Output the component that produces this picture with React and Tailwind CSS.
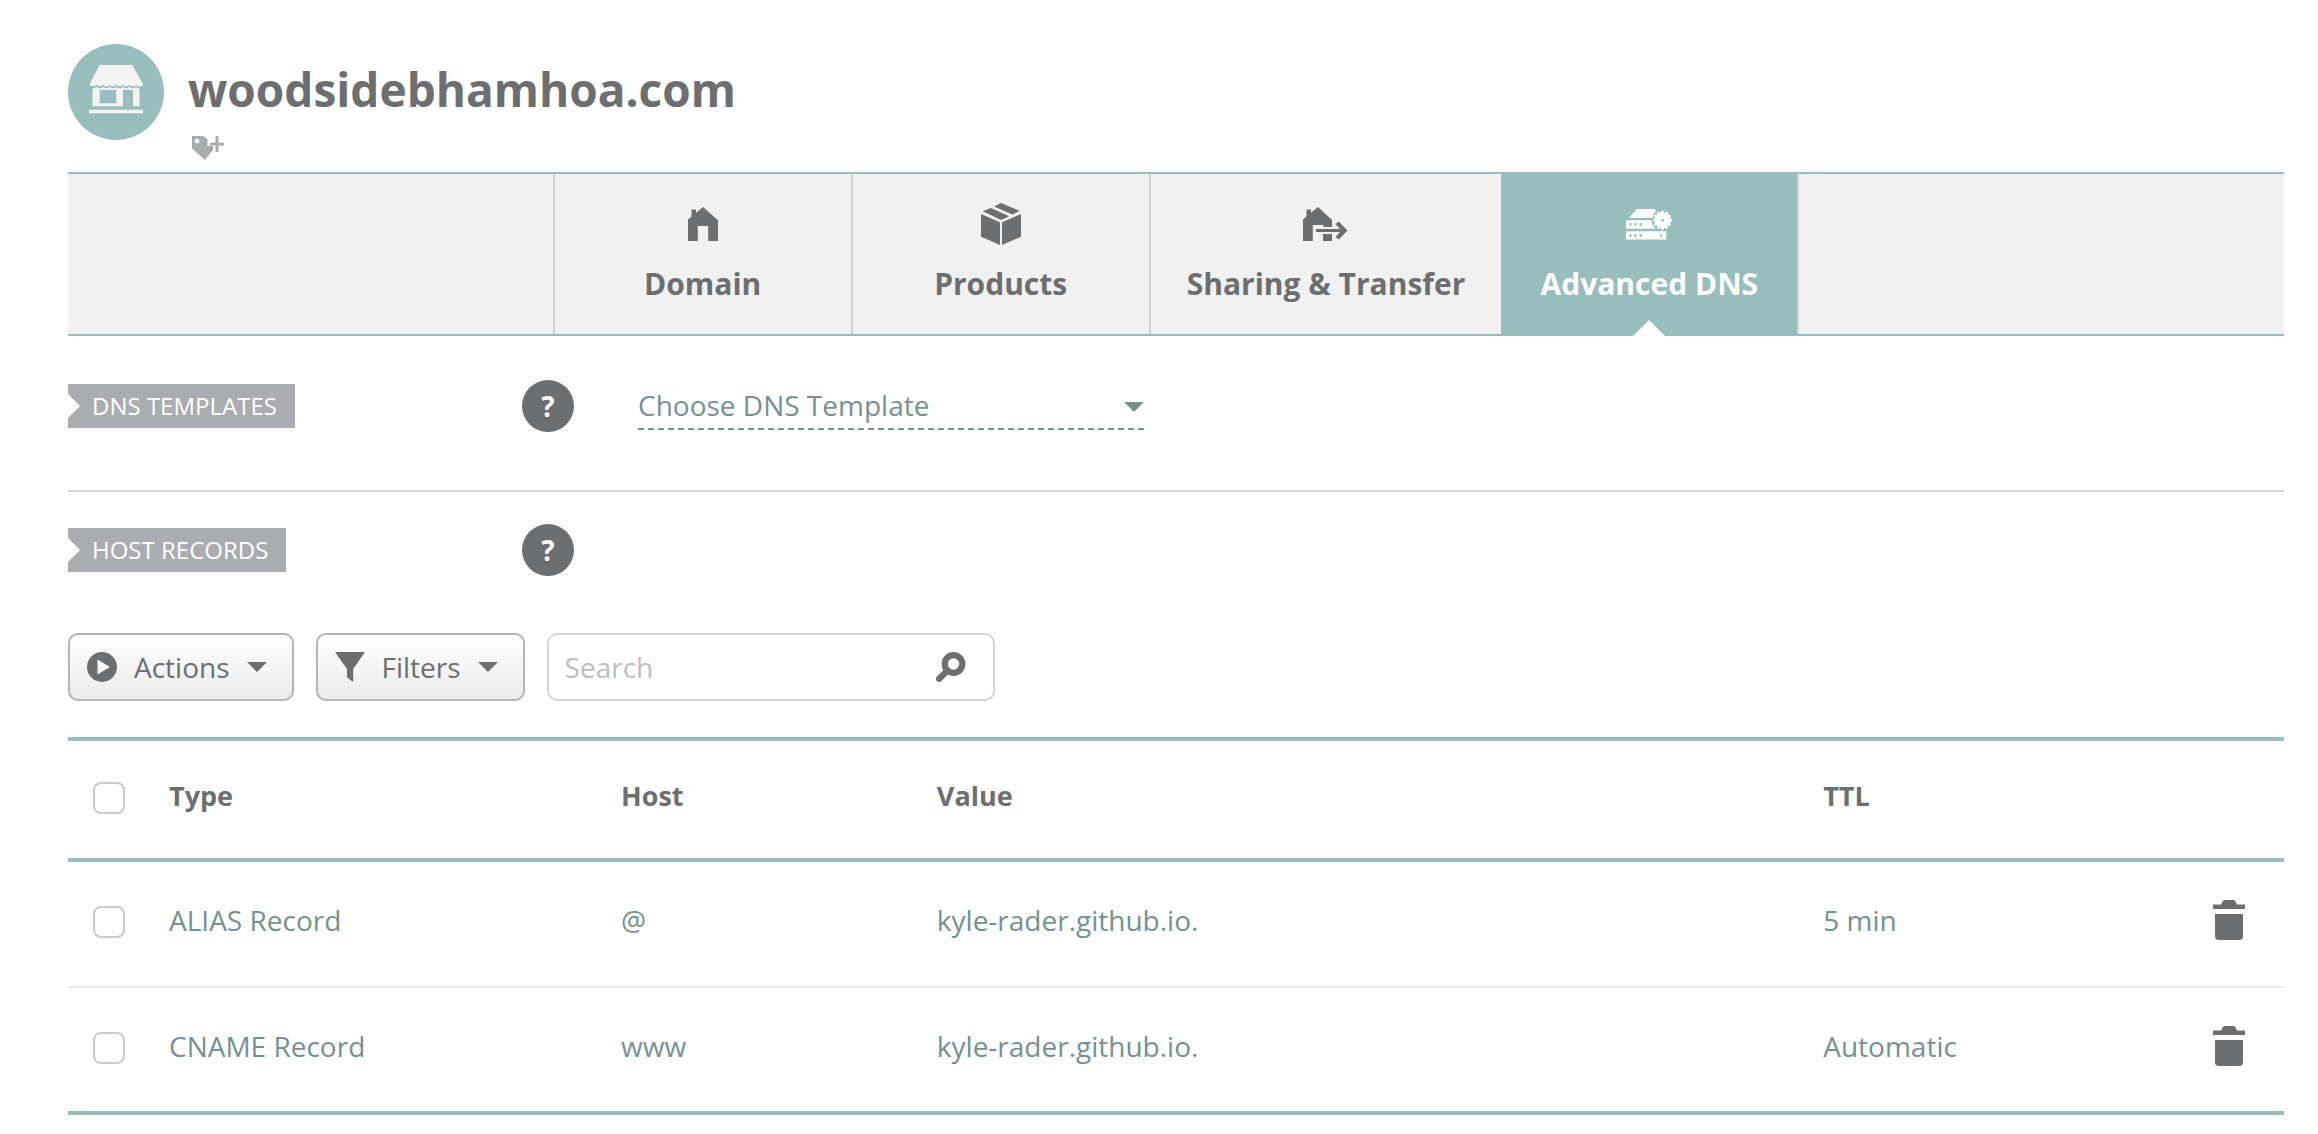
import React from "react";

function StoreIcon() {
  return (
    <svg viewBox="0 0 96 96" className="size-24 shrink-0" aria-hidden="true">
      <circle cx="48" cy="48" r="48" fill="#97bebd" />
      <g fill="#f3f3f3">
        <path d="M31.5 21h33L75 40v.5a3.4 2.400 0 0 1-6.700 0a3.400 2.400 0 0 1-6.700 0a3.400 2.400 0 0 1-6.700 0a3.400 2.400 0 0 1-6.600 0a3.400 2.400 0 0 1-6.700 0a3.400 2.400 0 0 1-6.700 0a3.400 2.400 0 0 1-6.600 0a3.400 2.400 0 0 1-6.600 0V40z" />
        <path
          fillRule="evenodd"
          d="M24.500 44.500q2.200 0 4-1.700 3 3 6.600 0 3.300 3 6.600 0 3.300 3 6.600 0 3.300 3 6.600 0 3.300 3 6.600 0 3.300 3 6.600 0 1.500 1.700 3.400 1.700V62.300H65V46H55v16.300H24.500zM31.700 46v13.300h16.600V46z"
        />
        <path d="M21 65.800h54v3.400H21z" />
      </g>
    </svg>
  );
}

function TagPlusIcon() {
  return (
    <svg viewBox="0 0 32 24" className="h-6 w-8" fill="#a9abae" aria-hidden="true">
      <path
        fillRule="evenodd"
        d="M0 0h11.500l4 3.500V10h5.500v4L13 24 0 12.500zM5 2.800a2.400 2.400 0 1 0 0 4.800 2.400 2.400 0 0 0 0-4.800z"
      />
      <path d="M23.500 0h3v6.800H32v2.800h-5.500V16h-3V9.600H18V6.800h5.500z" />
    </svg>
  );
}

function HouseIcon() {
  return (
    <svg viewBox="0 0 30 34" width="30" height="34" fill="currentColor" aria-hidden="true">
      <path d="M15 0l15 13.200V34H20.200V19H9.800v15H0V12.500L3.500 9.500V2.500H8v3.300z" />
    </svg>
  );
}

function BoxIcon() {
  return (
    <svg viewBox="0 0 40 42" width="40" height="42" fill="currentColor" aria-hidden="true">
      <path d="M20 0l18.500 8-7 3.500L13 3.400zM9.800 5L28.300 13.200 20 17 1.800 8.300z" />
      <path d="M0 11l19 8.300V42L0 33.800zM40 11l-19 8.300V42l19-8.200z" />
    </svg>
  );
}

function TransferIcon() {
  return (
    <svg viewBox="0 0 45 34" width="45" height="34" fill="currentColor" aria-hidden="true">
      <path d="M15 0l14 13v7h-8.500v-2H9.800v16H0V12.500L3.500 9.500V2.500H8v3.300z" />
      <path d="M20 27h9v7h-9z" />
      <path d="M13 22h24l-4.500-5 3.300-2.500 8.700 9-8.700 9-3.300-2.500 4.500-5H13z" />
    </svg>
  );
}

function ServerIcon() {
  const teeth = [0, 30, 60, 90, 120, 150];
  return (
    <svg viewBox="0 0 46 31" width="46" height="31" fill="currentColor" aria-hidden="true">
      <path d="M10.700 0h17.500l2 1.800a11.500 11.500 0 0 0-3.700 7.200H3z" />
      <path
        fillRule="evenodd"
        d="M0 11.300h25.600a11.500 11.500 0 0 0 3.900 8.500H0zM3.400 14v3h2v-3zM8.400 14v3h2v-3zM13.600 14v3h2v-3z"
      />
      <path
        fillRule="evenodd"
        d="M0 22.200h40.300v8.300H0zM3.400 25v3h2v-3zM8.400 25v3h2v-3zM13.600 25v3h2v-3zM34.300 25v3h2v-3z"
      />
      <circle cx="36.500" cy="11.300" r="7.800" />
      {teeth.map((a) => (
        <rect key={a} x="35" y="1.800" width="3" height="19" rx="1" transform={`rotate(${a} 36.500 11.300)`} />
      ))}
      <circle cx="36.500" cy="11.300" r="1.400" fill="#97bebd" />
    </svg>
  );
}

function PlayIcon() {
  return (
    <svg viewBox="0 0 30 30" className="size-[30px]" fill="currentColor" aria-hidden="true">
      <path fillRule="evenodd" d="M15 0a15 15 0 1 0 0 30 15 15 0 0 0 0-30zM10.500 7.500L23 15l-12.500 7.500z" />
    </svg>
  );
}

function FunnelIcon() {
  return (
    <svg viewBox="0 0 30 30" className="size-[30px]" fill="currentColor" aria-hidden="true">
      <path d="M0 0h30L18.200 17v13L12 25.500V17z" />
    </svg>
  );
}

function SearchIcon() {
  return (
    <svg viewBox="0 0 30 30" className="size-[30px]" fill="none" stroke="currentColor" aria-hidden="true">
      <circle cx="17.500" cy="12" r="8.800" strokeWidth="6.200" />
      <path d="M11 19L3.200 26.800" strokeWidth="6.200" strokeLinecap="round" />
    </svg>
  );
}

function TrashIcon() {
  return (
    <svg viewBox="0 0 32 40" className="h-10 w-8" fill="currentColor" aria-hidden="true">
      <path d="M0 4.500h8L10 .8Q10.500 0 11.500 0h9q1 0 1.500.8l2 3.700h8V9H0z" />
      <path d="M2 14h28v22a4 4 0 0 1-4 4H6a4 4 0 0 1-4-4z" />
    </svg>
  );
}

function Caret() {
  return (
    <svg viewBox="0 0 20 10" className="h-2.5 w-5" fill="currentColor" aria-hidden="true">
      <path d="M0 0h20L10 10z" />
    </svg>
  );
}

const tabs = [
  { label: "Domain", Icon: HouseIcon },
  { label: "Products", Icon: BoxIcon },
  { label: "Sharing & Transfer", Icon: TransferIcon },
  { label: "Advanced DNS", Icon: ServerIcon, active: true },
];

const records = [
  { type: "ALIAS Record", host: "@", value: "kyle-rader.github.io.", ttl: "5 min" },
  { type: "CNAME Record", host: "www", value: "kyle-rader.github.io.", ttl: "Automatic" },
];

function SectionLabel({ children }) {
  return (
    <div className="flex w-[454px]">
      <h2 className="relative flex h-11 items-center bg-[#abacb0] pl-6 pr-[18px] text-2xl text-white">
        <svg viewBox="0 0 12 24" className="absolute left-0 top-2.5 h-6 w-3" fill="#ffffff" aria-hidden="true">
          <path d="M0 0l12 12L0 24z" />
        </svg>
        {children}
      </h2>
    </div>
  );
}

function HelpButton({ label }) {
  return (
    <button
      type="button"
      aria-label={label}
      className="flex size-[52px] items-center justify-center rounded-full bg-[#6d6e70] text-[28px] leading-none font-bold text-white"
    >
      ?
    </button>
  );
}

function ToolButton({ Icon, children }) {
  return (
    <button
      type="button"
      className="flex h-[68px] items-center rounded-[10px] border-2 border-[#b5b5b6] bg-linear-to-b from-white to-[#ebebeb] px-[17px]"
    >
      <Icon />
      <span className="mx-[17px]">{children}</span>
      <span className="mr-2">
        <Caret />
      </span>
    </button>
  );
}

function Check({ label }) {
  return (
    <input
      type="checkbox"
      aria-label={label}
      className="block size-8 appearance-none rounded-lg border-2 border-[#cbcbcc] bg-white checked:bg-[#97bebd]"
    />
  );
}

export default function App() {
  return (
    <main className="bg-white pt-11 pr-[34px] pb-[18px] pl-[68px] font-['Open_Sans',sans-serif] text-[28px] leading-10 text-[#6d6e70]">
      <header className="flex h-32 gap-6">
        <StoreIcon />
        <div className="pt-[21px]">
          <h1 className="text-[46px] leading-[48px] font-bold">woodsidebhamhoa.com</h1>
          <button type="button" aria-label="Add tag" className="mt-[23px] ml-1 block">
            <TagPlusIcon />
          </button>
        </div>
      </header>

      <nav className="flex h-[164px] justify-center border-y-2 border-[#97bebd] bg-[#f1f1f1]">
        {tabs.map(({ label, Icon, active }) => (
          <a
            key={label}
            href="#"
            aria-current={active ? "page" : undefined}
            className={
              active
                ? "relative flex min-w-[298px] flex-col items-center border-r-2 border-[#d2d4d4] bg-[#97bebd] px-9 pt-[26px] text-[30px] font-bold text-white"
                : "flex min-w-[298px] flex-col items-center border-l-2 border-[#d2d4d4] px-9 pt-[26px] text-[30px] font-bold"
            }
          >
            <span className="flex h-12 items-center">
              <Icon />
            </span>
            <span className="mt-4">{label}</span>
            {active && (
              <svg viewBox="0 0 32 16" className="absolute -bottom-0.5 left-1/2 h-4 w-8 -translate-x-1/2" fill="#ffffff" aria-hidden="true">
                <path d="M16 0l16 16H0z" />
              </svg>
            )}
          </a>
        ))}
      </nav>

      <section className="flex items-center border-b-2 border-[#d5d5d6] pt-11 pb-[58px]">
        <SectionLabel>DNS TEMPLATES</SectionLabel>
        <HelpButton label="About DNS templates" />
        <div className="relative ml-16 h-[50px] w-[506px] self-start text-[#739290]">
          <select
            aria-label="DNS template"
            className="h-full w-full appearance-none border-b-2 border-dashed border-[#739290] bg-transparent pt-0.5"
          >
            <option>Choose DNS Template</option>
          </select>
          <span className="pointer-events-none absolute top-[22px] right-0">
            <Caret />
          </span>
        </div>
      </section>

      <section className="flex items-center pt-8">
        <SectionLabel>HOST RECORDS</SectionLabel>
        <HelpButton label="About host records" />
      </section>

      <div className="mt-[57px] flex gap-[22px]">
        <ToolButton Icon={PlayIcon}>Actions</ToolButton>
        <ToolButton Icon={FunnelIcon}>Filters</ToolButton>
        <form className="flex h-[68px] w-[448px] items-center rounded-[10px] border-2 border-[#d5d5d6] pr-[27px] pl-4">
          <input
            type="search"
            aria-label="Search"
            placeholder="Search"
            className="min-w-0 flex-1 bg-transparent placeholder:text-[#bdbec0]"
          />
          <button type="submit" aria-label="Run search">
            <SearchIcon />
          </button>
        </form>
      </div>

      <table className="mt-9 w-full table-fixed border-separate border-spacing-0 text-left">
        <thead>
          <tr className="h-[125px] *:border-y-4 *:border-[#9bbdba]">
            <th className="w-[101px] pb-1 pl-[25px]">
              <Check label="Select all records" />
            </th>
            <th className="w-[20.4%] pb-2 text-[27px]">Type</th>
            <th className="w-[14.25%] pb-2 text-[27px]">Host</th>
            <th className="w-[40%] pb-2 text-[27px]">Value</th>
            <th className="pb-2 text-[27px]">TTL</th>
            <th className="w-[71px]" aria-label="Delete" />
          </tr>
        </thead>
        <tbody className="text-[#739290]">
          {records.map((r) => (
            <tr
              key={r.type}
              className="h-[126px] *:border-b-2 *:border-[#e7e8e8] last:h-[127px] last:*:border-b-4 last:*:border-[#9bbdba]"
            >
              <td className="pb-1 pl-[25px]">
                <Check label={`Select ${r.type}`} />
              </td>
              <td className="pb-2">{r.type}</td>
              <td className="pb-2">{r.host}</td>
              <td className="pb-2">{r.value}</td>
              <td className="pb-2">{r.ttl}</td>
              <td className="pb-2 text-[#6d6e70]">
                <button type="button" aria-label={`Delete ${r.type}`} className="block">
                  <TrashIcon />
                </button>
              </td>
            </tr>
          ))}
        </tbody>
      </table>
    </main>
  );
}
